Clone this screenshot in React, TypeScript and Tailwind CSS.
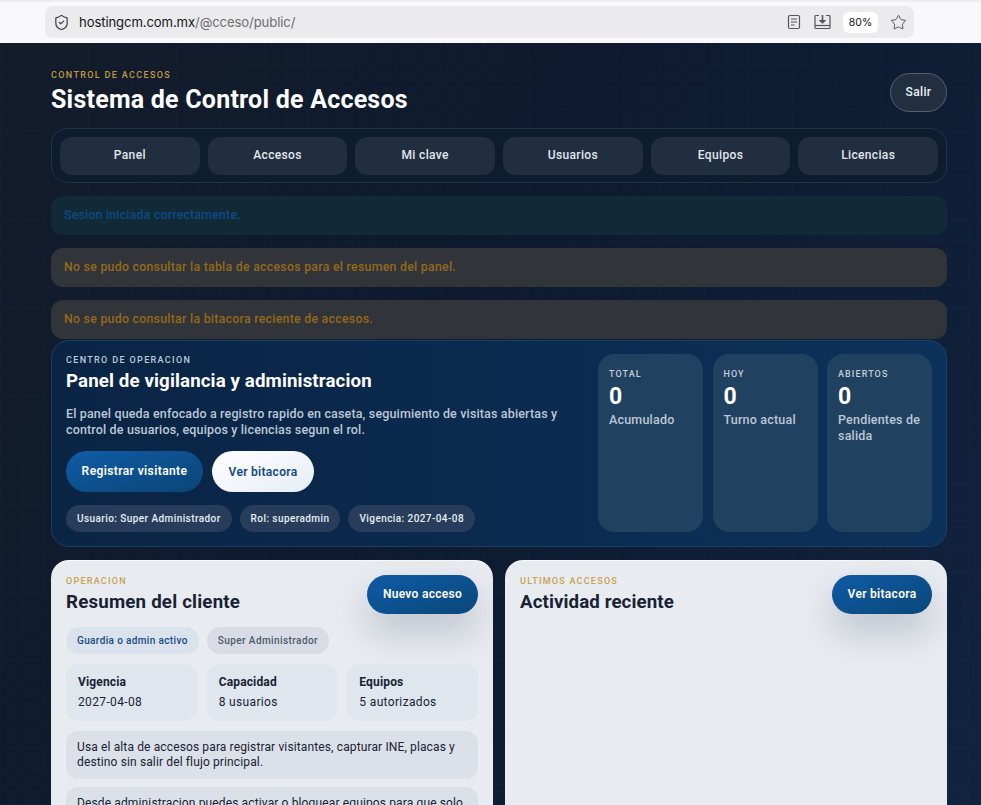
import { ShieldCheck, Star } from "lucide-react";

const navItems = ["Panel", "Accesos", "Mi clave", "Usuarios", "Equipos", "Licencias"];

const stats = [
  { label: "TOTAL", value: "0", note: "Acumulado" },
  { label: "HOY", value: "0", note: "Turno actual" },
  { label: "ABIERTOS", value: "0", note: "Pendientes de salida" },
];

const facts = [
  { title: "Vigencia", value: "2027-04-08" },
  { title: "Capacidad", value: "8 usuarios" },
  { title: "Equipos", value: "5 autorizados" },
];

function BrowserBar() {
  return (
    <div className="h-[43px] shrink-0 bg-[#f9f9fb] border-t-2 border-[#eeeeef] pl-[45px] pt-1">
      <div className="w-[869px] h-[32px] rounded-lg bg-[#ebebed] flex items-center pl-[8px] pr-[7px]">
        <ShieldCheck size={17} strokeWidth={1.7} className="text-[#3d3d42]" />
        <span className="ml-[9px] pt-[2px] text-[13.1px] text-[#15141a] font-['Inter',sans-serif] tracking-[-0.1px]">
          hostingcm.com.mx<span className="text-[#6d6d72]">/@cceso/public/</span>
        </span>
        <div className="ml-auto flex items-center">
          <svg width="14" height="16" viewBox="0 0 14 16" fill="none" stroke="#55555a" strokeWidth="1.2">
            <rect x="1.5" y="1.5" width="11" height="13" rx="1.5" />
            <path d="M4 5h6M4 8h6M4 11h3.5" />
          </svg>
          <svg className="ml-[13px]" width="17" height="16" viewBox="0 0 17 16" fill="none" stroke="#55555a" strokeWidth="1.2">
            <path d="M5 1.5H2A1 1 0 0 0 1 2.5v11a1 1 0 0 0 1 1h13a1 1 0 0 0 1-1v-11a1 1 0 0 0-1-1h-3" />
            <path d="M1 11.5h15" />
            <path d="M8.5 1v6.5" strokeWidth="1.6" />
            <path d="M6 6.5h5L8.5 9z" fill="#55555a" />
          </svg>
          <span className="ml-[12px] w-[35px] h-[21px] pt-[1px] rounded-md bg-white flex items-center justify-center text-[10.5px] text-[#15141a] font-['Inter',sans-serif]">
            80%
          </span>
          <Star size={17} strokeWidth={1.3} className="ml-[12px] text-[#4a4a4f]" />
        </div>
      </div>
    </div>
  );
}

function PrimaryButton({ label, className }: { label: string; className: string }) {
  return (
    <button className={`h-[39px] pb-[2px] rounded-full bg-linear-to-br from-[#0f5ba6] to-[#0a4779] text-white text-[12px] font-semibold tracking-[0.3px] shadow-[0_18px_36px_rgba(15,35,65,0.2)] ${className}`}>
      {label}
    </button>
  );
}

function Hero() {
  return (
    <section className="rounded-[18px] border border-[#1c3f68] bg-linear-to-r from-[#0a2444] to-[#0c315a] px-[14px] pt-[13px] flex gap-[10px] h-[207px]">
      <div className="w-[522px] shrink-0">
        <p className="text-[9px] leading-[12px] tracking-[1.35px] text-[#bfcbda] font-medium">CENTRO DE OPERACION</p>
        <h2 className="mt-[3px] text-[18.7px] leading-[24px] font-bold text-white tracking-[0.12px]">Panel de vigilancia y administracion</h2>
        <p className="mt-[13px] max-w-[500px] text-[12.5px] leading-[16px] text-[#bcc8d6] font-medium tracking-[0.15px]">
          El panel queda enfocado a registro rapido en caseta, seguimiento de visitas abiertas y control de usuarios, equipos y licencias segun el rol.
        </p>
        <div className="mt-[13px] flex gap-[9px]">
          <button className="w-[137px] h-[41px] rounded-full bg-linear-to-br from-[#0f5ca8] to-[#0b4575] text-white text-[12px] font-semibold tracking-[0.4px] pb-[2px]">
            Registrar visitante
          </button>
          <button className="w-[102px] h-[41px] rounded-full bg-linear-to-br from-white to-[#e6edf7] text-[#164a80] text-[12px] font-semibold tracking-[0.3px]">
            Ver bitacora
          </button>
        </div>
        <div className="mt-[13px] flex gap-[8px]">
          {["Usuario: Super Administrador", "Rol: superadmin", "Vigencia: 2027-04-08"].map((chip) => (
            <span key={chip} className="h-[27px] px-[11px] rounded-full bg-[#273d5b] flex items-center text-[10px] font-medium text-[#e8edf4] tracking-[0.42px]">
              {chip}
            </span>
          ))}
        </div>
      </div>
      <div className="flex-1 grid grid-cols-3 gap-[9.5px] h-[178px]">
        {stats.map((stat) => (
          <div key={stat.label} className="rounded-[16px] bg-[#20415f] px-[11px] pt-[14px]">
            <p className="text-[9px] leading-[12px] tracking-[1.1px] text-[#c3cedb] font-medium">{stat.label}</p>
            <p className="mt-[5px] text-[23px] leading-[24px] font-bold text-white">{stat.value}</p>
            <p className="mt-[3px] text-[12.5px] leading-[16px] text-[#bcc8d6] font-medium tracking-[0.2px]">{stat.note}</p>
          </div>
        ))}
      </div>
    </section>
  );
}

function ClientCard() {
  return (
    <section className="rounded-t-[18px] bg-[#e8ebf0] border-t border-white/70 px-[15px] pt-[14px] h-[260px] overflow-hidden">
      <div className="flex justify-between">
        <div>
          <p className="text-[9px] leading-[12px] tracking-[1.25px] text-[#c9a24d] font-medium">OPERACION</p>
          <h3 className="mt-[3px] text-[18.7px] leading-[24px] font-bold text-[#182233] tracking-[0.2px]">Resumen del cliente</h3>
        </div>
        <PrimaryButton label="Nuevo acceso" className="w-[111px]" />
      </div>
      <div className="mt-[13px] flex gap-[8px]">
        <span className="h-[27px] px-[11px] rounded-full bg-[#dae3ed] flex items-center text-[10px] font-medium text-[#164a80] tracking-[0.36px]">Guardia o admin activo</span>
        <span className="h-[27px] px-[11px] rounded-full bg-[#d9dce4] flex items-center text-[10px] font-medium text-[#4d5a6c] tracking-[0.42px]">Super Administrador</span>
      </div>
      <div className="mt-[10px] grid grid-cols-3 gap-[10px]">
        {facts.map((fact) => (
          <div key={fact.title} className="h-[57px] rounded-[13px] bg-[#dfe6ee] px-[12px] pt-[10px]">
            <p className="text-[12px] leading-[16px] font-bold text-[#182233] tracking-[0.15px]">{fact.title}</p>
            <p className="mt-[4px] text-[12px] leading-[16px] text-[#182233] tracking-[0.35px]">{fact.value}</p>
          </div>
        ))}
      </div>
      <div className="mt-[10px] rounded-[12px] bg-[#dce0e8] px-[11px] py-[9px] text-[12px] leading-[15px] text-[#182233] tracking-[0.13px]">
        Usa el alta de accesos para registrar visitantes, capturar INE, placas y destino sin salir del flujo principal.
      </div>
      <div className="mt-[8px] rounded-[12px] bg-[#dce0e8] px-[11px] py-[9px] text-[12px] leading-[15px] text-[#182233] tracking-[0.13px]">
        Desde administracion puedes activar o bloquear equipos para que solo
      </div>
    </section>
  );
}

function ActivityCard() {
  return (
    <section className="rounded-t-[18px] bg-[#e8ebf0] border-t border-white/70 px-[15px] pt-[14px] h-[260px]">
      <div className="flex justify-between">
        <div>
          <p className="text-[9px] leading-[12px] tracking-[1.25px] text-[#c9a24d] font-medium">ULTIMOS ACCESOS</p>
          <h3 className="mt-[3px] text-[18.7px] leading-[24px] font-bold text-[#182233] tracking-[0.1px]">Actividad reciente</h3>
        </div>
        <PrimaryButton label="Ver bitacora" className="w-[100px]" />
      </div>
    </section>
  );
}

export default function App() {
  return (
    <div className="h-[805px] flex flex-col overflow-hidden font-['Roboto',sans-serif]">
      <BrowserBar />
      <main className="flex-1 min-h-0 overflow-hidden px-[51px] pr-[34px] pt-[30px] bg-[#0e1b2f] bg-[linear-gradient(rgba(255,255,255,0.008)_1px,transparent_1px),linear-gradient(90deg,rgba(255,255,255,0.008)_1px,transparent_1px),linear-gradient(120deg,#131c2a_0%,#0d1a2f_45%,#12233e_100%)] bg-[size:22px_22px,22px_22px,100%_100%]">
        <header className="flex justify-between items-start h-[55px]">
          <div>
            <p className="text-[9px] leading-[12px] tracking-[1.35px] text-[#c19a45] font-medium mt-[-4px]">CONTROL DE ACCESOS</p>
            <h1 className="mt-[3px] text-[25px] leading-[32px] font-bold text-white tracking-[0.22px]">Sistema de Control de Accesos</h1>
          </div>
          <button className="w-[57px] h-[39px] rounded-full border border-[#56616f] bg-[#222f40] text-[12px] font-medium text-[#eef1f5] tracking-[0.35px] pb-[2px]">
            Salir
          </button>
        </header>
        <nav className="h-[55px] rounded-[16px] border border-[#223247] bg-[#0e1c30] px-[8px] flex items-center gap-[8px]">
          {navItems.map((item) => (
            <a key={item} className="flex-1 h-[38px] pb-[1px] rounded-[12px] bg-[#212e40] flex items-center justify-center text-[12px] font-medium text-[#e2e7ee] tracking-[0.35px]">
              {item}
            </a>
          ))}
        </nav>
        <div className="mt-[13px] h-[39px] pb-[1px] rounded-[12px] bg-[#122a38] flex items-center px-[13px] text-[12.3px] font-medium text-[#0d4a86] tracking-[0.22px]">
          Sesion iniciada correctamente.
        </div>
        <div className="mt-[13px] h-[39px] pb-[1px] rounded-[12px] bg-[#313438] flex items-center px-[13px] text-[12.3px] font-medium text-[#956a1c] tracking-[0.28px]">
          No se pudo consultar la tabla de accesos para el resumen del panel.
        </div>
        <div className="mt-[13px] h-[39px] pb-[1px] rounded-[12px] bg-[#313438] flex items-center px-[13px] text-[12.3px] font-medium text-[#956a1c] tracking-[0.28px]">
          No se pudo consultar la bitacora reciente de accesos.
        </div>
        <div className="mt-[1px]">
          <Hero />
        </div>
        <div className="mt-[13px] grid grid-cols-2 gap-[12px]">
          <ClientCard />
          <ActivityCard />
        </div>
      </main>
    </div>
  );
}
